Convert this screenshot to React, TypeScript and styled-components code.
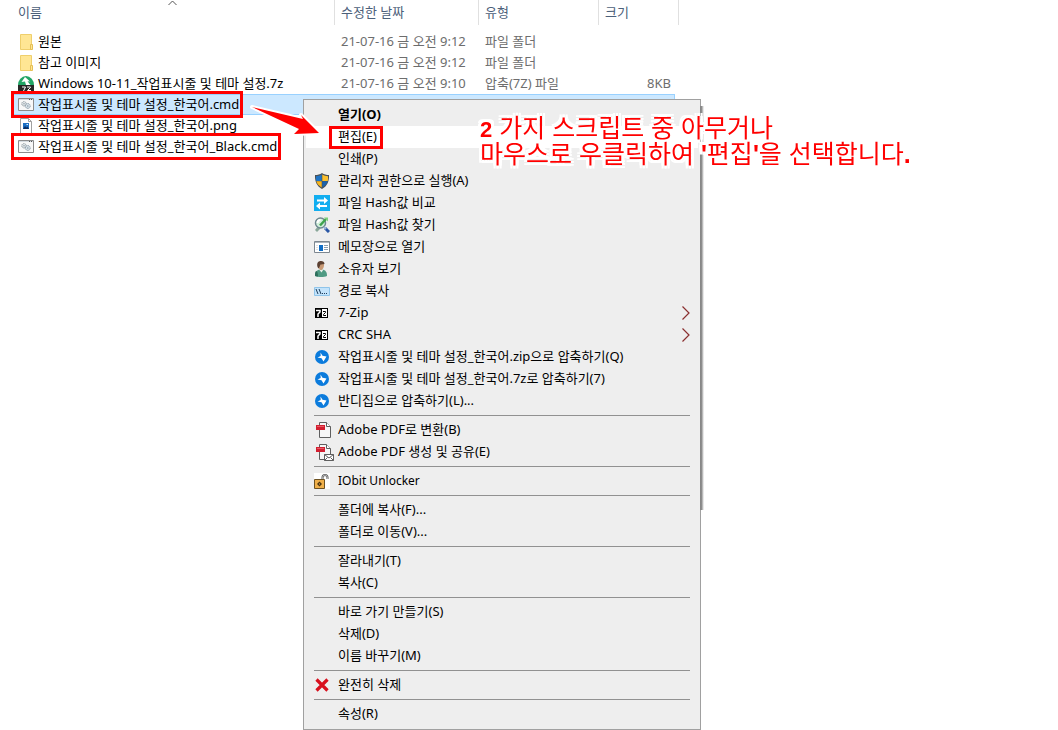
import React from "react";
import styled, { createGlobalStyle, css } from "styled-components";

const GlobalStyle = createGlobalStyle`
  *, *::before, *::after { box-sizing: border-box; }
  body {
    margin: 0;
    background: #fff;
    color: #000;
    font: 13px/20px "Noto Sans", "Noto Sans CJK KR", sans-serif;
  }
`;

const Page = styled.main`
  position: relative;
  min-height: 730px;
`;

const FileTable = styled.table`
  table-layout: fixed;
  width: 664px;
  margin-left: 11px;
  border-collapse: separate;
  border-spacing: 0;
`;

const Col = styled.col<{ $w: number }>`
  width: ${(p) => p.$w}px;
`;

const HeadCell = styled.th<{ $first?: boolean; $last?: boolean }>`
  position: relative;
  height: 25px;
  padding: 0 6px 2px ${(p) => (p.$first ? 7 : 6)}px;
  color: #4c607a;
  font-weight: 400;
  text-align: left;
  vertical-align: middle;
  &::after {
    content: "";
    position: absolute;
    top: 0;
    right: ${(p) => (p.$last ? -4 : 0)}px;
    width: 1px;
    height: 100%;
    background: #e0e0e0;
  }
`;

const SortMark = styled.svg`
  position: absolute;
  top: 0;
  left: 157px;
`;

const Body = styled.tbody`
  &::before {
    content: "";
    display: block;
    height: 6px;
  }
`;

const Row = styled.tr<{ $selected?: boolean }>`
  height: 21px;
  ${(p) =>
    p.$selected &&
    css`
      background: #cce8ff;
      box-shadow: inset 0 0 0 1px #99d1ff;
    `}
`;

const Cell = styled.td<{ $first?: boolean; $right?: boolean }>`
  height: 21px;
  padding: 0 4px 0 ${(p) => (p.$first ? 7 : 6)}px;
  color: #6d6d6d;
  line-height: 21px;
  white-space: nowrap;
  text-align: ${(p) => (p.$right ? "right" : "left")};
`;

const FileName = styled.span<{ $marked?: boolean }>`
  position: relative;
  display: inline-flex;
  align-items: center;
  gap: 4px;
  height: 21px;
  color: #000;
  vertical-align: top;
  ${(p) =>
    p.$marked &&
    css`
      &::after {
        content: "";
        position: absolute;
        inset: -3px -4px -3px -7px;
        border: 3px solid #f00;
      }
    `}
`;

const Menu = styled.div`
  position: absolute;
  top: 99px;
  left: 303px;
  width: 398px;
  padding: 4px 2px;
  border: 1px solid #a0a0a0;
  background: #eee;
  &::after {
    content: "";
    position: absolute;
    top: 6px;
    left: 100%;
    width: 4px;
    height: 404px;
    background: linear-gradient(to right, #858585, #8e8e8e 40%, #fff);
  }
`;

const Item = styled.button<{ $active?: boolean; $bold?: boolean }>`
  display: flex;
  align-items: center;
  gap: 8px;
  width: 100%;
  height: 22px;
  padding: 0 8px;
  border: 0;
  background: ${(p) => (p.$active ? "#fff" : "transparent")};
  color: #000;
  font: inherit;
  font-weight: ${(p) => (p.$bold ? 700 : 400)};
  text-align: left;
  white-space: nowrap;
`;

const IconSlot = styled.span`
  display: flex;
  flex: none;
  width: 16px;
  height: 16px;
`;

const Label = styled.span<{ $marked?: boolean; $small?: boolean }>`
  position: relative;
  padding-bottom: ${(p) => (p.$small ? 0 : 2)}px;
  font-size: ${(p) => (p.$small ? 12 : 13)}px;
  ${(p) =>
    p.$marked &&
    css`
      &::after {
        content: "";
        position: absolute;
        inset: 0 -6px -1px -9px;
        border: 3px solid #f00;
      }
    `}
`;

const Chevron = styled.svg`
  margin-left: auto;
`;

const Separator = styled.hr`
  height: 1px;
  margin: 3px 8px;
  border: 0;
  background: #919191;
`;

const Note = styled.p`
  position: absolute;
  top: 115px;
  left: 480px;
  margin: 0;
  color: #f00;
  font: 400 25px/26px "Liberation Sans", "Noto Sans CJK KR", sans-serif;
  white-space: nowrap;
  filter: drop-shadow(3px 0 0 #fff) drop-shadow(-3px 0 0 #fff)
    drop-shadow(0 3px 0 #fff) drop-shadow(0 -3px 0 #fff);
`;

const Digit = styled.b`
  font-size: 22px;
  line-height: 20px;
`;

const Arrow = styled.svg`
  position: absolute;
  top: 99px;
  left: 245px;
`;

const svg = { width: 16, height: 16, viewBox: "0 0 16 16", "aria-hidden": true } as const;

const FolderIcon = () => (
  <svg {...svg}>
    <path d="M2.500 .5h11v15h-11z" fill="#ffe694" stroke="#efcf6c" />
    <path d="M12.500 15.500v-5h2v5z" fill="#ffe694" stroke="#e5bf55" />
  </svg>
);

const ArchiveIcon = () => (
  <svg {...svg}>
    <path d="M0 9a8 9 0 0 1 16 0z" fill="#22a566" />
    <path d="M7 1l5 4.500-2.500-.2L12.500 9H8L7 5.500 3.500 6z" fill="#fff" />
    <path d="M0 9h16v7H0z" fill="#262626" />
    <path d="M4 11h3.500L5.500 15M9 11h3.500v.5L9.500 14.500h3.500" fill="none" stroke="#fff" />
  </svg>
);

const CmdIcon = () => (
  <svg {...svg}>
    <path d="M.5 1.500h15v12H.5z" fill="#f8f8f8" stroke="#8c8c8c" />
    <path d="M1 2.500h14" stroke="#d5dbe0" />
    <path d="M11 2.500h1M13 2.500h1" stroke="#555" />
    <circle cx="6" cy="6.800" r="2.200" fill="#e4e9ec" stroke="#8b969c" strokeDasharray="1.200 .5" />
    <circle cx="9.800" cy="9" r="2.400" fill="#dbe4ea" stroke="#8497a5" strokeDasharray="1.200 .5" />
    <circle cx="6" cy="6.800" r=".7" fill="#8b969c" />
    <circle cx="9.800" cy="9" r=".8" fill="#8497a5" />
  </svg>
);

const PngIcon = () => (
  <svg {...svg}>
    <path d="M2.500 .5h8l3 3v12h-11z" fill="#fff" stroke="#a0a0a0" />
    <path d="M10.500 .5v3h3" fill="none" stroke="#a0a0a0" />
    <path d="M5 5h6v6H5z" fill="#1c6fc4" />
    <path d="M5 11l2-3 1.500 1.500L9.500 8.500 11 11z" fill="#0b2f63" />
    <path d="M8.500 6h1.500v1H8.500z" fill="#d9efff" />
  </svg>
);

const ShieldIcon = () => (
  <svg {...svg}>
    <path d="M8 0c2 1.500 4.500 2 7 2 .3 6-1.500 11-7 14C2.500 13 .7 8 1 2c2.500 0 5-.5 7-2z" fill="#4a5157" />
    <path d="M7.700 1.500V8H2.200C1.900 6.500 1.900 5 2 3.200c2 0 4-.6 5.700-1.700z" fill="#1f74c4" />
    <path d="M8.300 1.500C10 2.600 12 3.200 14 3.200c.1 1.800.1 3.300-.2 4.800H8.300z" fill="#fbc02f" />
    <path d="M2.300 8.300h5.400v6.200c-3-1.700-4.700-3.700-5.400-6.200z" fill="#f9b51c" />
    <path d="M8.300 8.300h5.400c-.7 2.500-2.400 4.500-5.400 6.200z" fill="#1b62ad" />
  </svg>
);

const CompareIcon = () => (
  <svg {...svg}>
    <path d="M0 0h16v16H0z" fill="#12aef0" />
    <path d="M3 5.500h8M5 11h8" stroke="#fff" strokeWidth="2" />
    <path d="M10 2l4 3.500L10 9zM6 7.500v7L2 11z" fill="#fff" />
  </svg>
);

const FindIcon = () => (
  <svg {...svg}>
    <path d="M1 13l4-5 1 4-3 3z" fill="#8aa79a" />
    <circle cx="6.500" cy="6" r="5" fill="#d3f0dc" stroke="#6e8790" strokeWidth="1.500" />
    <path d="M6 8.500L12 2" stroke="#3fa34d" strokeWidth="2.500" />
    <path d="M10 .5h4v4z" fill="#7bd07a" />
    <path d="M3.500 6a3 3 0 0 1 3-3" stroke="#fff" strokeWidth="2" fill="none" />
    <path d="M11 11l4 4" stroke="#2a56a5" strokeWidth="3" />
    <path d="M10 10l2 2" stroke="#9db6d8" strokeWidth="2" />
  </svg>
);

const NotepadIcon = () => (
  <svg {...svg}>
    <path d="M.5 2.500h15v11H.5z" fill="#fff" stroke="#7d8790" />
    <path d="M1 3.500h14" stroke="#aeb6bd" />
    <path d="M5 6h4v6H5z" fill="#0f6cc4" />
    <path d="M2 6.500h2M2 8.500h2M2 10.500h2" stroke="#dfe3e6" />
    <path d="M10 6.500h4M10 8.500h4M10 10.500h4" stroke="#8ea0b0" />
  </svg>
);

const OwnerIcon = () => (
  <svg {...svg}>
    <path d="M1 15c0-4 1.500-6 5-6.500h2c4 .5 5 3 5 6.500-3 1.300-9 1.300-12 0z" fill="#4f9a83" />
    <path d="M5 8.500l2.500 3 2-3z" fill="#e9efe9" />
    <path d="M4 4c0-2.500 1.500-3.500 3-3.500s3 1 3 3.500S8.500 9 7 9 4 6.500 4 4z" fill="#c99a76" />
    <path d="M3.500 6C2.500 2 4 0 7 0c2 0 3.500 1 3.500 3-1.500.5-3 .3-4 .5C5.800 4.500 5.500 7 4.500 7.500z" fill="#5b4032" />
    <path d="M2 10c1.500 0 2 3 2 5.500L1 15c0-2 0-4 1-5z" fill="#2e6f5c" />
  </svg>
);

const PathIcon = () => (
  <svg {...svg}>
    <path d="M.5 4.500h15v8H.5z" fill="#c3e3fb" stroke="#8fc4ea" />
    <path d="M2 6l2 5M5 6l2 5" stroke="#1d3d5c" fill="none" />
    <path d="M8 10.500h1M10 10.500h1M12 10.500h1" stroke="#1d3d5c" />
  </svg>
);

const SevenZipIcon = () => (
  <svg {...svg}>
    <path d="M1 3h13v10H1z" fill="#000" />
    <path d="M8 4h5v8H8z" fill="#fff" />
    <path d="M2 5.500h4v1.500l-2 2V12" fill="none" stroke="#fff" strokeWidth="1.500" />
    <path d="M9 6.500h2.500v1L9.500 9.500v1H12" fill="none" stroke="#000" />
  </svg>
);

const BandizipIcon = () => (
  <svg {...svg}>
    <circle cx="8" cy="8" r="7" fill="#0b7bdc" />
    <path d="M6.500 3.500l2 3.200 4 .8L9.500 12.500 7.500 9.300 3.500 8.500l3.200-1.500z" fill="#fff" />
  </svg>
);

const pdfPage = (
  <>
    <path d="M3.500 .5h7l4 4v11h-11z" fill="#f6f6f6" stroke="#5f5f5f" strokeLinejoin="round" />
    <path d="M10.500 .5v4h4" fill="#fff" stroke="#5f5f5f" />
    <path d="M0 3h9v5H0z" fill="#d31f30" />
    <path d="M1 4h7v1H1z" fill="#ea5b66" />
  </>
);

const PdfIcon = () => (
  <svg {...svg} overflow="visible">
    <g transform="translate(2 0)">{pdfPage}</g>
  </svg>
);

const PdfMailIcon = () => (
  <svg {...svg} overflow="visible">
    <g transform="translate(2 0)">
      {pdfPage}
      <path d="M8.500 10.500h9v6h-9z" fill="#fff" stroke="#5f5f5f" />
      <path d="M8.500 10.500l4.500 3.500 4.500-3.500M8.500 16.500l3-3M17.500 16.500l-3-3" fill="none" stroke="#5f5f5f" />
    </g>
  </svg>
);

const UnlockIcon = () => (
  <svg {...svg}>
    <path d="M0 0h16v16H0z" fill="#fff" />
    <path d="M8.500 6V4.500a2.500 2.500 0 0 1 5 0V6" fill="none" stroke="#555" strokeWidth="2" />
    <path d="M8.500 6V4.500a2.500 2.500 0 0 1 5 0V6" fill="none" stroke="#ddd" strokeWidth=".7" />
    <path d="M.5 6.500h10v9H.5z" fill="#f0b04a" stroke="#6d5224" />
    <path d="M5.500 8.500L8 11l-2.500 2.500L3 11z" fill="#4a3310" />
    <path d="M5.500 10.300l.7.700-.7.700-.7-.7z" fill="#f0b04a" />
  </svg>
);

const DeleteIcon = () => (
  <svg {...svg}>
    <path d="M2.500 2.500l11 11M13.500 2.500l-11 11" stroke="#d8101e" strokeWidth="3.200" />
  </svg>
);

type FileRow = {
  name: string;
  icon: React.ReactNode;
  date?: string;
  type?: string;
  size?: string;
  selected?: boolean;
  marked?: boolean;
};

const files: FileRow[] = [
  { name: "원본", icon: <FolderIcon />, date: "21-07-16 금 오전 9:12", type: "파일 폴더" },
  { name: "참고 이미지", icon: <FolderIcon />, date: "21-07-16 금 오전 9:12", type: "파일 폴더" },
  { name: "Windows 10-11_작업표시줄 및 테마 설정.7z", icon: <ArchiveIcon />, date: "21-07-16 금 오전 9:10", type: "압축(7Z) 파일", size: "8KB" },
  { name: "작업표시줄 및 테마 설정_한국어.cmd", icon: <CmdIcon />, selected: true, marked: true },
  { name: "작업표시줄 및 테마 설정_한국어.png", icon: <PngIcon /> },
  { name: "작업표시줄 및 테마 설정_한국어_Black.cmd", icon: <CmdIcon />, marked: true },
];

type MenuEntry = {
  label: string;
  icon?: React.ReactNode;
  bold?: boolean;
  active?: boolean;
  submenu?: boolean;
  small?: boolean;
};

const menuGroups: MenuEntry[][] = [
  [
    { label: "열기(O)", bold: true },
    { label: "편집(E)", active: true },
    { label: "인쇄(P)" },
    { label: "관리자 권한으로 실행(A)", icon: <ShieldIcon /> },
    { label: "파일 Hash값 비교", icon: <CompareIcon /> },
    { label: "파일 Hash값 찾기", icon: <FindIcon /> },
    { label: "메모장으로 열기", icon: <NotepadIcon /> },
    { label: "소유자 보기", icon: <OwnerIcon /> },
    { label: "경로 복사", icon: <PathIcon /> },
    { label: "7-Zip", icon: <SevenZipIcon />, submenu: true },
    { label: "CRC SHA", icon: <SevenZipIcon />, submenu: true },
    { label: "작업표시줄 및 테마 설정_한국어.zip으로 압축하기(Q)", icon: <BandizipIcon /> },
    { label: "작업표시줄 및 테마 설정_한국어.7z로 압축하기(7)", icon: <BandizipIcon /> },
    { label: "반디집으로 압축하기(L)...", icon: <BandizipIcon /> },
  ],
  [
    { label: "Adobe PDF로 변환(B)", icon: <PdfIcon /> },
    { label: "Adobe PDF 생성 및 공유(E)", icon: <PdfMailIcon /> },
  ],
  [{ label: "IObit Unlocker", icon: <UnlockIcon />, small: true }],
  [{ label: "폴더에 복사(F)..." }, { label: "폴더로 이동(V)..." }],
  [{ label: "잘라내기(T)" }, { label: "복사(C)" }],
  [{ label: "바로 가기 만들기(S)" }, { label: "삭제(D)" }, { label: "이름 바꾸기(M)" }],
  [{ label: "완전히 삭제", icon: <DeleteIcon /> }],
  [{ label: "속성(R)" }],
];

export default function App() {
  return (
    <Page>
      <GlobalStyle />
      <FileTable>
        <colgroup>
          <Col $w={324} />
          <Col $w={144} />
          <Col $w={120} />
          <Col $w={76} />
        </colgroup>
        <thead>
          <tr>
            <HeadCell $first>
              이름
              <SortMark width="9" height="6" viewBox="0 0 9 6" aria-hidden>
                <path d="M.5 5l4-4 4 4" fill="none" stroke="#555" />
              </SortMark>
            </HeadCell>
            <HeadCell>수정한 날짜</HeadCell>
            <HeadCell>유형</HeadCell>
            <HeadCell $last>크기</HeadCell>
          </tr>
        </thead>
        <Body>
          {files.map((f) => (
            <Row key={f.name} $selected={f.selected}>
              <Cell $first>
                <FileName $marked={f.marked}>
                  {f.icon}
                  {f.name}
                </FileName>
              </Cell>
              <Cell>{f.date}</Cell>
              <Cell>{f.type}</Cell>
              <Cell $right>{f.size}</Cell>
            </Row>
          ))}
        </Body>
      </FileTable>
      <Menu>
        {menuGroups.map((group, i) => (
          <React.Fragment key={i}>
            {i > 0 && <Separator />}
            {group.map((m) => (
              <Item key={m.label} type="button" $active={m.active} $bold={m.bold}>
                <IconSlot>{m.icon}</IconSlot>
                <Label $marked={m.active} $small={m.small}>
                  {m.label}
                </Label>
                {m.submenu && (
                  <Chevron width="8" height="14" viewBox="0 0 8 14" aria-hidden>
                    <path d="M.5 .5L7 7 .5 13.500" fill="none" stroke="#8a2f2f" strokeWidth="1.200" />
                  </Chevron>
                )}
              </Item>
            ))}
          </React.Fragment>
        ))}
      </Menu>
      <Arrow width="80" height="44" viewBox="0 0 80 44" aria-hidden>
        <path
          d="M7 8L58 20 56 16 74 34 49 35 54 30z"
          fill="#f00"
          stroke="#fff"
          strokeWidth="4"
          strokeLinejoin="round"
          paintOrder="stroke"
        />
      </Arrow>
      <Note>
        <Digit>2</Digit> 가지 스크립트 중 아무거나
        <br />
        마우스로 우클릭하여 <b>'</b>편집<b>'</b>을 선택합니다<b>.</b>
      </Note>
    </Page>
  );
}
